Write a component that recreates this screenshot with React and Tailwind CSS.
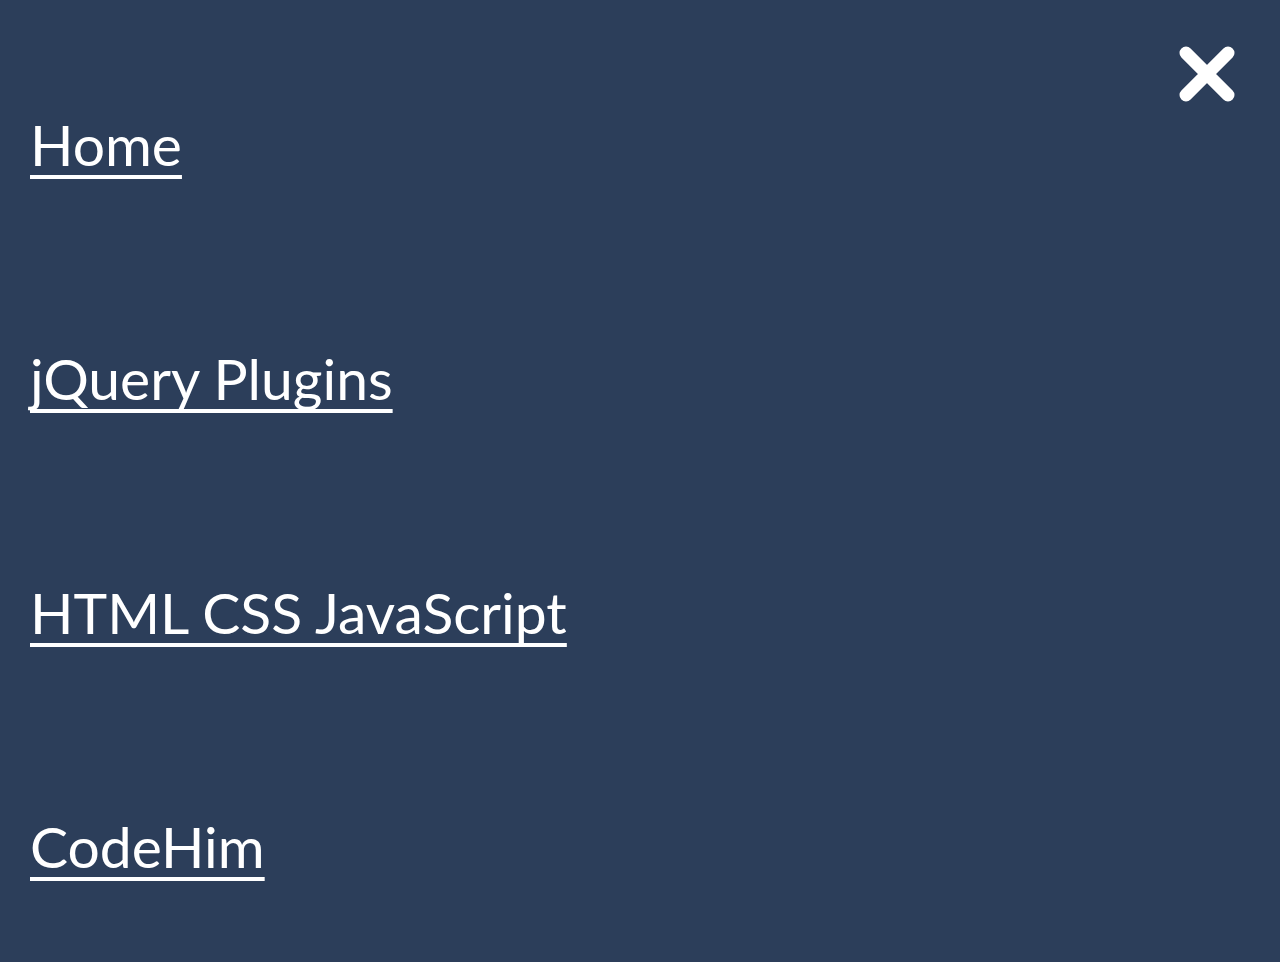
const LINKS = ['Home', 'jQuery Plugins', 'HTML CSS JavaScript', 'CodeHim'];

function CloseIcon() {
  return (
    <svg width="60" height="60" viewBox="0 0 60 60" fill="none">
      <path d="M9 9 L51 51 M51 9 L9 51" stroke="#fff" strokeWidth="13" strokeLinecap="round" />
    </svg>
  );
}

export default function App() {
  return (
    <div className="relative h-[962px] w-full overflow-hidden bg-[#2c3e5a] text-white" style={{ fontFamily: 'Lato, "Open Sans", sans-serif' }}>
      <button className="absolute right-[43px] top-[44px]">
        <CloseIcon />
      </button>
      <nav className="flex flex-col pl-[30px] pt-[104px]">
        {LINKS.map((l) => (
          <a
            key={l}
            href="#"
            className="h-[234px] self-start text-[57px] leading-[80px] underline decoration-[4px] underline-offset-[9px] [text-decoration-skip-ink:none]"
          >
            {l}
          </a>
        ))}
      </nav>
    </div>
  );
}
